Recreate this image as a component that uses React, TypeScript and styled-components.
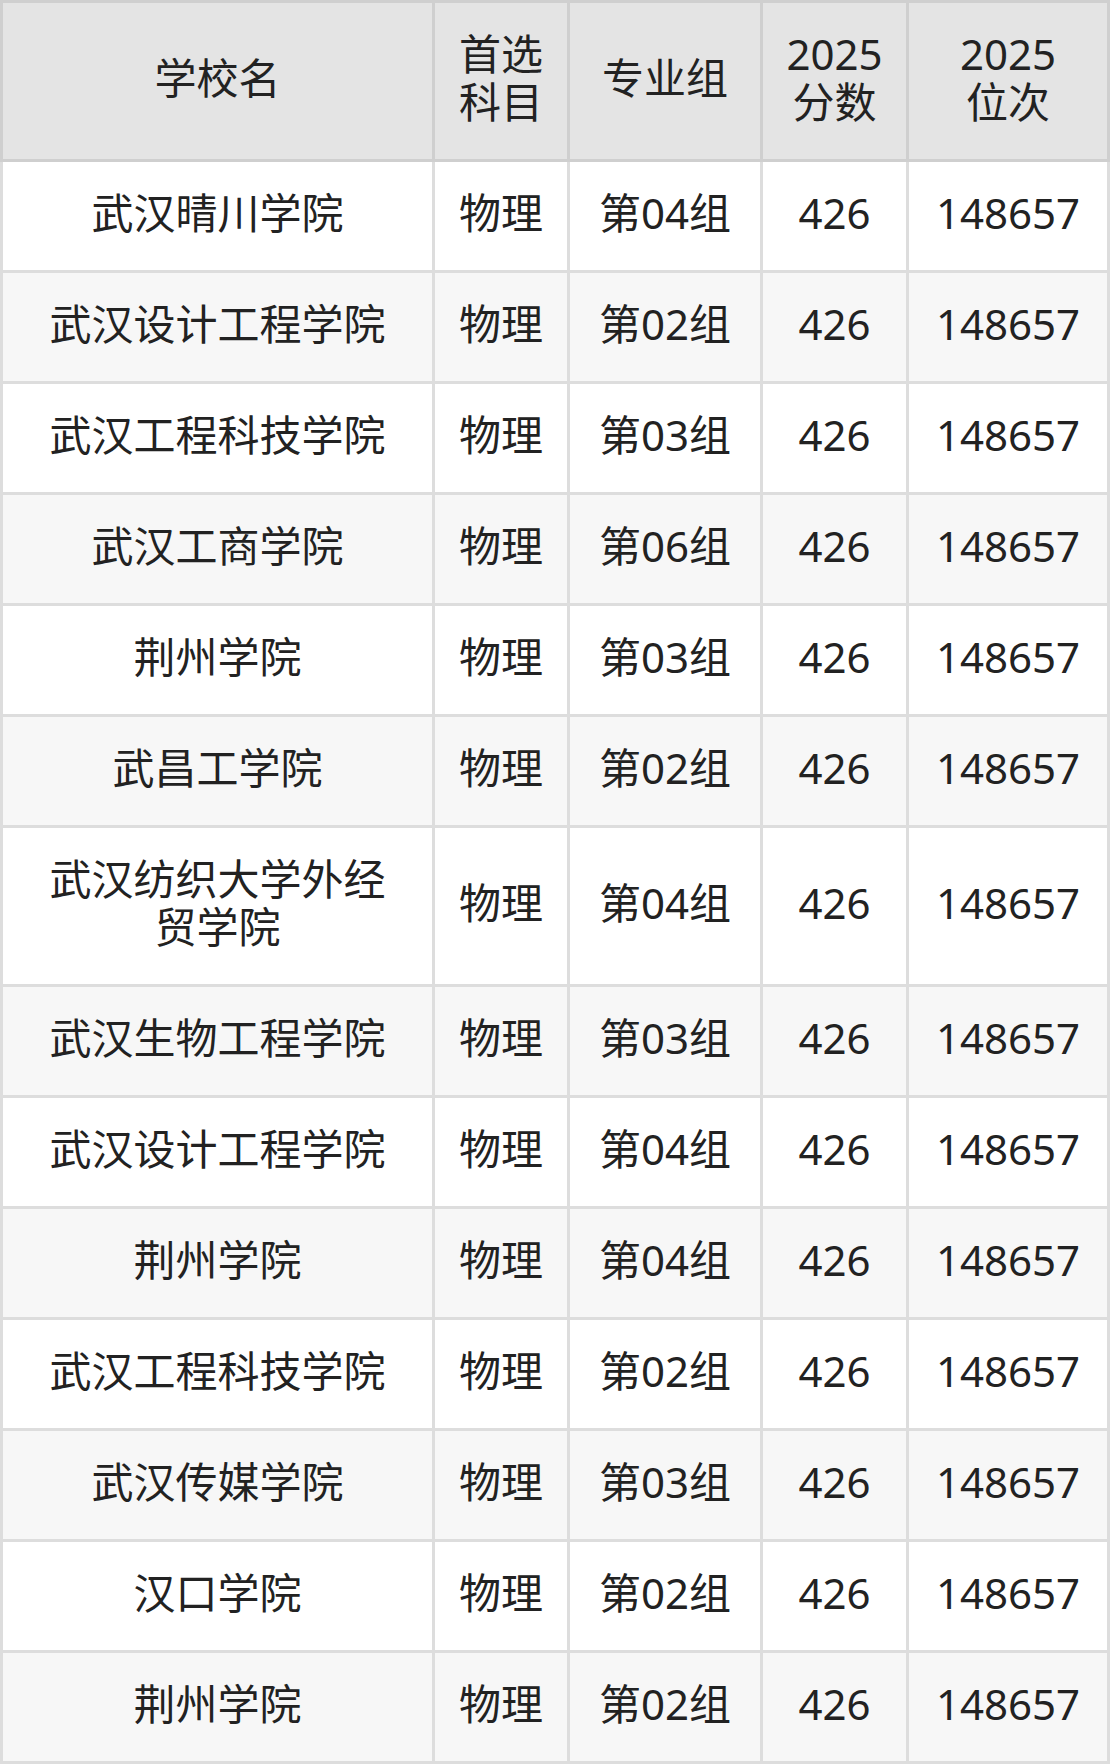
import styled, { createGlobalStyle } from 'styled-components';

const GlobalStyle = createGlobalStyle`
  html, body {
    margin: 0;
    padding: 0;
    background: #ffffff;
  }
  body {
    font-family: 'Noto Sans', 'Noto Sans CJK SC', sans-serif;
    color: #222222;
  }
`;

interface Admission {
  school: string;
  subject: string;
  group: string;
  score: number;
  rank: number;
}

const rows: Admission[] = [
  { school: '武汉晴川学院', subject: '物理', group: '第04组', score: 426, rank: 148657 },
  { school: '武汉设计工程学院', subject: '物理', group: '第02组', score: 426, rank: 148657 },
  { school: '武汉工程科技学院', subject: '物理', group: '第03组', score: 426, rank: 148657 },
  { school: '武汉工商学院', subject: '物理', group: '第06组', score: 426, rank: 148657 },
  { school: '荆州学院', subject: '物理', group: '第03组', score: 426, rank: 148657 },
  { school: '武昌工学院', subject: '物理', group: '第02组', score: 426, rank: 148657 },
  { school: '武汉纺织大学外经贸学院', subject: '物理', group: '第04组', score: 426, rank: 148657 },
  { school: '武汉生物工程学院', subject: '物理', group: '第03组', score: 426, rank: 148657 },
  { school: '武汉设计工程学院', subject: '物理', group: '第04组', score: 426, rank: 148657 },
  { school: '荆州学院', subject: '物理', group: '第04组', score: 426, rank: 148657 },
  { school: '武汉工程科技学院', subject: '物理', group: '第02组', score: 426, rank: 148657 },
  { school: '武汉传媒学院', subject: '物理', group: '第03组', score: 426, rank: 148657 },
  { school: '汉口学院', subject: '物理', group: '第02组', score: 426, rank: 148657 },
  { school: '荆州学院', subject: '物理', group: '第02组', score: 426, rank: 148657 },
];

const headers: string[][] = [
  ['学校名'],
  ['首选', '科目'],
  ['专业组'],
  ['2025', '分数'],
  ['2025', '位次'],
];

export default function App() {
  return (
    <>
      <GlobalStyle />
      <Table>
        <HeaderRow>
          {headers.map((lines, i) => (
            <HeadCell key={i}>
              <HeadText>
                {lines.map((line, j) => (
                  <HeadLine key={j}>{line}</HeadLine>
                ))}
              </HeadText>
            </HeadCell>
          ))}
        </HeaderRow>
        <Body>
          {rows.map((row, i) => (
            <Row key={i}>
              <Cell $striped={i % 2 === 1} $wide>
                {row.school}
              </Cell>
              <Cell $striped={i % 2 === 1}>{row.subject}</Cell>
              <Cell $striped={i % 2 === 1}>{row.group}</Cell>
              <Cell $striped={i % 2 === 1}>{row.score}</Cell>
              <Cell $striped={i % 2 === 1}>{row.rank}</Cell>
            </Row>
          ))}
        </Body>
      </Table>
    </>
  );
}

const columns = '429px 132px 190px 143px 198px';

const Table = styled.div`
  width: 1110px;
  display: flex;
  flex-direction: column;
  font-size: 42px;
  line-height: 48px;
`;

const HeaderRow = styled.div`
  display: grid;
  grid-template-columns: ${columns};
  gap: 3px;
  padding: 3px;
  background: #cfcfcf;
`;

const HeadCell = styled.div`
  display: flex;
  align-items: center;
  justify-content: center;
  text-align: center;
  padding: 27px 6px 33px;
  background: #e4e4e4;
`;

const HeadText = styled.div`
  display: flex;
  flex-direction: column;
  align-items: center;
`;

const HeadLine = styled.div`
  height: 48px;
  white-space: nowrap;
`;

const Body = styled.div`
  display: flex;
  flex-direction: column;
  gap: 3px;
  padding: 0 3px 3px;
  background: #dddddd;
`;

const Row = styled.div`
  display: grid;
  grid-template-columns: ${columns};
  gap: 3px;
`;

const Cell = styled.div<{ $striped?: boolean; $wide?: boolean }>`
  display: flex;
  align-items: center;
  justify-content: center;
  text-align: center;
  padding: ${p => (p.$wide ? '27px 30px 33px' : '27px 4px 33px')};
  background: ${p => (p.$striped ? '#f7f7f7' : '#ffffff')};
`;
